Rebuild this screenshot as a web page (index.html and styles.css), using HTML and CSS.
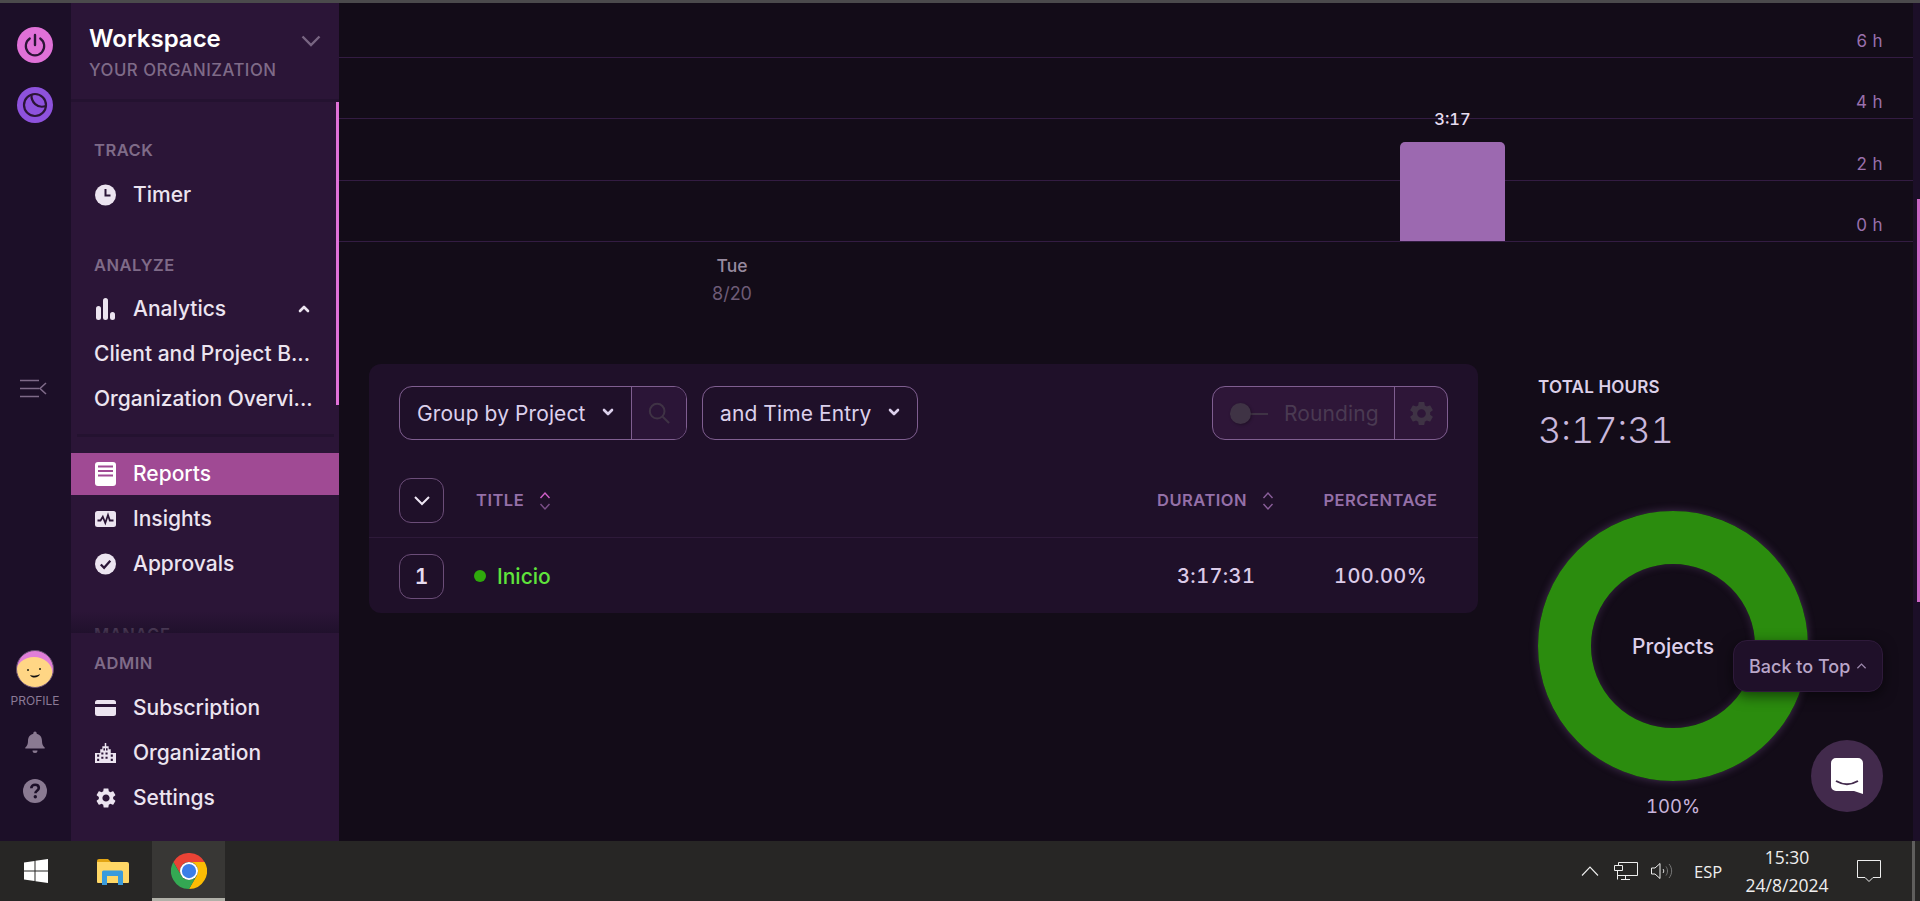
FILE: index.html
```html
<!DOCTYPE html>
<html lang="en">
<head>
<meta charset="utf-8">
<title>Reports</title>
<link rel="stylesheet" href="styles.css">
</head>
<body>
<svg class="defs" width="0" height="0">
  <symbol id="gear" viewBox="0 0 24 24"><path d="M19.14 12.94c.04-.3.06-.61.06-.94 0-.32-.02-.64-.07-.94l2.03-1.58c.18-.14.23-.41.12-.61l-1.92-3.32c-.12-.22-.37-.29-.59-.22l-2.39.96c-.5-.38-1.03-.7-1.62-.94l-.36-2.54c-.04-.24-.24-.41-.48-.41h-3.84c-.24 0-.43.17-.47.41l-.36 2.54c-.59.24-1.13.57-1.62.94l-2.39-.96c-.22-.08-.47 0-.59.22L2.74 8.87c-.12.21-.08.47.12.61l2.03 1.58c-.05.3-.09.63-.09.94s.02.64.07.94l-2.03 1.58c-.18.14-.23.41-.12.61l1.92 3.32c.12.22.37.29.59.22l2.39-.96c.5.38 1.03.7 1.62.94l.36 2.54c.05.24.24.41.48.41h3.84c.24 0 .44-.17.47-.41l.36-2.54c.59-.24 1.13-.56 1.62-.94l2.39.96c.22.08.47 0 .59-.22l1.92-3.32c.12-.22.07-.47-.12-.61l-2.01-1.58zM12 15.6c-1.98 0-3.6-1.62-3.6-3.6s1.62-3.6 3.6-3.6 3.6 1.62 3.6 3.6-1.62 3.6-3.6 3.6z"/></symbol>
  <symbol id="chev" viewBox="0 0 12 8"><path d="M2 2l4 4 4-4" fill="none" stroke="currentColor" stroke-width="2.600" stroke-linecap="round" stroke-linejoin="round"/></symbol>
  <symbol id="sort" viewBox="0 0 12 20"><path d="M1.500 7L6 2l4.500 5" fill="none" stroke="var(--sort-up)" stroke-width="1.400"/><path d="M1.500 13L6 18l4.500-5" fill="none" stroke="var(--sort-down)" stroke-width="1.400"/></symbol>
</svg>

<div class="topline"></div>
<div class="app">
  <nav class="rail">
    <div class="rail-top">
      <svg class="rail-btn" viewBox="0 0 36 36"><circle cx="18" cy="18" r="18" fill="#e071d8"/><path d="M12.800 11.500a9.200 9.200 0 1 0 10.400 0" fill="none" stroke="#2b1537" stroke-width="2.200" stroke-linecap="round"/><path d="M18 8v10" stroke="#2b1537" stroke-width="2.400" stroke-linecap="round"/></svg>
      <svg class="rail-btn" viewBox="0 0 36 36"><circle cx="18" cy="18" r="18" fill="#8e52dd"/><circle cx="18" cy="18" r="11" fill="none" stroke="#2b1537" stroke-width="2.200"/><path d="M14.500 7.500C14 15 20 22 29 19" fill="none" stroke="#2b1537" stroke-width="2.200"/></svg>
    </div>
    <svg class="collapse" viewBox="0 0 27 20"><path d="M0 1.500h19M0 9.500h19M0 17.500h19M26 4l-6 5.500 6 5.500" fill="none" stroke="#7e6a88" stroke-width="1.600"/></svg>
    <div class="rail-bottom">
      <svg class="avatar" viewBox="0 0 38 38"><defs><clipPath id="av"><circle cx="19" cy="19" r="18.500"/></clipPath></defs><g clip-path="url(#av)"><rect width="38" height="38" fill="#e07ed8"/><ellipse cx="18" cy="23" rx="18.500" ry="16" fill="#ffd685"/></g><circle cx="19" cy="19" r="18.500" fill="none" stroke="#64506f"/><circle cx="12" cy="20" r="1" fill="#221"/><circle cx="24" cy="19" r="1" fill="#221"/><path d="M14 25c3 1 7 1 10-1-1 4-8 5-10 1z" fill="#111"/></svg>
      <span class="profile">PROFILE</span>
      <svg class="bell" viewBox="0 0 24 24"><path fill="#8a7a92" d="M12 1.500a1.700 1.700 0 0 1 1.700 1.700v.6c3.500.8 5.300 3.700 5.300 7.200 0 3 .8 5 2.700 6.500v1H2.300v-1C4.200 16 5 14 5 11c0-3.500 1.800-6.400 5.300-7.200v-.6A1.700 1.700 0 0 1 12 1.500zM9.500 20.500h5a2.500 2.500 0 0 1-5 0z"/></svg>
      <svg class="help" viewBox="0 0 24 24"><circle cx="12" cy="12" r="12" fill="#8a7a92"/><path d="M8.300 9.300c0-2.200 1.700-3.500 3.800-3.500s3.700 1.200 3.700 3.100c0 2.900-3.400 2.700-3.400 5.300" fill="none" stroke="#1c0f28" stroke-width="2.600"/><circle cx="12.300" cy="17.800" r="1.700" fill="#1c0f28"/></svg>
    </div>
  </nav>

  <aside class="sidebar">
    <header class="org">
      <div class="org-text">
        <div class="org-name">Workspace</div>
        <div class="org-sub">YOUR ORGANIZATION</div>
      </div>
      <svg class="org-chev" viewBox="0 0 20 12"><path d="M1.500 1.500L10 10l8.500-8.500" fill="none" stroke="#786582" stroke-width="2.400"/></svg>
    </header>
    <div class="nav-scroll">
      <div class="nav-thumb"></div>
      <div class="nav-title first">TRACK</div>
      <a class="nav-row">
        <svg class="nav-icon" viewBox="0 0 21 21"><circle cx="10.500" cy="10.500" r="10.500" fill="#ece4f0"/><path d="M10.500 4.500v6.500h5" fill="none" stroke="#2b1537" stroke-width="2"/></svg>
        <span>Timer</span>
      </a>
      <div class="nav-title">ANALYZE</div>
      <a class="nav-row">
        <svg class="nav-icon" viewBox="0 0 21 22"><rect x="1" y="8" width="5" height="14" rx="2.500" fill="#ece4f0"/><rect x="8" y="0" width="5" height="22" rx="2.500" fill="#ece4f0"/><rect x="15" y="14" width="5" height="8" rx="2.500" fill="#ece4f0"/></svg>
        <span>Analytics</span>
        <svg class="nav-chev" viewBox="0 0 12 8"><use href="#chev" transform="rotate(180 6 4)"/></svg>
      </a>
      <a class="nav-row sub"><span>Client and Project B...</span></a>
      <a class="nav-row sub"><span>Organization Overvi...</span></a>
      <div class="nav-rule"></div>
      <a class="nav-row active">
        <svg class="nav-icon tall" viewBox="0 0 21 24"><rect width="21" height="24" rx="3" fill="#fff"/><path d="M3 4.500h15M3 9h15M3 13.500h15" stroke="#a04a94" stroke-width="2"/></svg>
        <span>Reports</span>
      </a>
      <a class="nav-row">
        <svg class="nav-icon" viewBox="0 0 21 16"><rect width="21" height="16" rx="2.500" fill="#ece4f0"/><path d="M2.500 9.500h3l2.300-3.800 2.500 6.300 2.700-8 1.800 5.500h3.700" fill="none" stroke="#2b1537" stroke-width="1.800"/></svg>
        <span>Insights</span>
      </a>
      <a class="nav-row">
        <svg class="nav-icon" viewBox="0 0 21 21"><circle cx="10.500" cy="10.500" r="10.500" fill="#ece4f0"/><path d="M5.800 11l3.300 3.300 6.200-7" fill="none" stroke="#2b1537" stroke-width="2.300"/></svg>
        <span>Approvals</span>
      </a>
      <div class="nav-title">MANAGE</div>
      <div class="nav-fade"></div>
    </div>
    <div class="admin">
      <div class="nav-title admin-title">ADMIN</div>
      <a class="nav-row">
        <svg class="nav-icon" viewBox="0 0 21 16"><rect width="21" height="16" rx="2.500" fill="#ece4f0"/><rect y="4" width="21" height="3" fill="#2b1537"/></svg>
        <span>Subscription</span>
      </a>
      <a class="nav-row">
        <svg class="nav-icon" viewBox="0 0 20 19"><path fill="#ece4f0" d="M5 6h2V3h2.300V0h1.400v3H13v3h2v3.500h5V19H0V9.500h5z"/><path fill="#2b1537" d="M8 5h1.500v2H8zM10.500 5H12v2h-1.500zM2 11h2v2H2zM2 15h2v2H2zM6 9h2v2H6zM6 13h2v2H6zM10 9h2v2h-2zM10 13h2v2h-2zM15 11h2v2h-2zM15 15h2v2h-2z"/></svg>
        <span>Organization</span>
      </a>
      <a class="nav-row">
        <svg class="nav-icon gear" viewBox="0 0 24 24"><use href="#gear"/></svg>
        <span>Settings</span>
      </a>
    </div>
  </aside>

  <main class="main">
    <section class="chart">
      <div class="grid-row r1"><span>6 h</span></div>
      <div class="grid-row r2"><span>4 h</span></div>
      <div class="grid-row r3"><span>2 h</span></div>
      <div class="grid-row r4"><span>0 h</span></div>
      <div class="bar"><span class="bar-label">3:17</span></div>
    </section>
    <div class="xaxis">
      <div class="xcol"><div class="x-day">Tue</div><div class="x-date">8/20</div></div>
    </div>
    <div class="content">
      <section class="card">
        <div class="controls">
          <div class="ctl ctl-group">
            <div class="ctl-select"><span>Group by Project</span><svg class="ctl-chev"><use href="#chev"/></svg></div>
            <div class="ctl-search">
              <svg viewBox="0 0 24 24"><circle cx="10" cy="10" r="8" fill="none" stroke="#3f3345" stroke-width="2.200"/><path d="M16 16l7 7" stroke="#3f3345" stroke-width="2.200"/></svg>
            </div>
          </div>
          <div class="ctl ctl-second">
            <div class="ctl-select"><span>and Time Entry</span><svg class="ctl-chev"><use href="#chev"/></svg></div>
          </div>
          <div class="ctl ctl-round">
            <div class="round-main">
              <span class="toggle"><i></i></span>
              <span>Rounding</span>
            </div>
            <div class="round-gear"><svg viewBox="0 0 24 24"><use href="#gear"/></svg></div>
          </div>
        </div>
        <div class="thead">
          <button class="sq"><svg viewBox="0 0 18 12"><path d="M2 2l7 7 7-7" fill="none" stroke="#eee6f4" stroke-width="2"/></svg></button>
          <div class="th th-title"><span>TITLE</span><svg class="sort active-sort"><use href="#sort"/></svg></div>
          <div class="th col-dur"><span>DURATION</span><svg class="sort"><use href="#sort"/></svg></div>
          <div class="th col-pct"><span>PERCENTAGE</span></div>
        </div>
        <div class="trow">
          <div class="sq">1</div>
          <div class="tname"><i class="dot"></i><span>Inicio</span></div>
          <div class="col-dur val">3:17:31</div>
          <div class="col-pct val">100.00%</div>
        </div>
      </section>
      <section class="totals">
        <div class="total-label">TOTAL HOURS</div>
        <div class="total-value">3:17:31</div>
        <div class="donut"><span>Projects</span></div>
        <div class="donut-pct">100%</div>
      </section>
    </div>
  </main>
  <div class="scroll"><div class="scroll-thumb"></div></div>
  <button class="backtop">Back to Top<svg viewBox="0 0 12 8"><path d="M1.500 6.500L6 2l4.500 4.500" fill="none" stroke="#9c88ac" stroke-width="1.400"/></svg></button>
  <button class="chat"><svg viewBox="0 0 32 36"><path fill="#fff" d="M5 0h22a5 5 0 0 1 5 5v31l-9-3H5a5 5 0 0 1-5-5V5a5 5 0 0 1 5-5z"/><path d="M5 23c7 4 15 4 22 0" fill="none" stroke="#422a4c" stroke-width="2"/></svg></button>
</div>

<footer class="taskbar">
  <svg class="win" viewBox="0 0 24 24"><path fill="#fff" d="M0 3.500l10.500-1.500v9.500H0zM11.500 1.800L24 0v11.500H11.500zM0 12.500h10.500V22L0 20.500zM11.500 12.500H24V24l-12.500-1.800z"/></svg>
  <svg class="explorer" viewBox="0 0 32 27"><path fill="#e2a514" d="M0 3a2 2 0 0 1 2-2h9l3 3h-14z"/><path fill="#ffd766" d="M0 4h30a2 2 0 0 1 2 2v18a1 1 0 0 1-1 1H1a1 1 0 0 1-1-1z"/><path fill="#3a9bdc" d="M5 27V14a1.500 1.500 0 0 1 1.500-1.500h18A1.500 1.500 0 0 1 26 14v13h-5v-9H10v9z"/></svg>
  <div class="chrome-tab">
    <svg class="chrome" viewBox="0 0 48 48"><path fill="#ea4335" d="M3.200 12A24 24 0 0 1 44.800 12H24A12 12 0 0 0 13.600 30Z"/><path fill="#fbbc04" d="M44.800 12A24 24 0 0 1 24 48L34.400 30A12 12 0 0 0 24 12Z"/><path fill="#34a853" d="M24 48A24 24 0 0 1 3.200 12L13.600 30A12 12 0 0 0 34.400 30Z"/><circle cx="24" cy="24" r="12" fill="#fff"/><circle cx="24" cy="24" r="9.500" fill="#3b7de8"/></svg>
  </div>
  <div class="tray">
    <svg class="t-up" viewBox="0 0 18 10"><path d="M1 9.500L9 1l8 8.500" fill="none" stroke="#eee" stroke-width="1.100"/></svg>
    <svg class="t-net" viewBox="0 0 24 18"><path d="M4.500 3.500V.5h19v13H3.500M3.500 8.500v9M7 17.500h9M11.500 13.500v4M.5 3.500h8V8.500h-8z" fill="none" stroke="#eee" stroke-width="1"/></svg>
    <svg class="t-vol" viewBox="0 0 23 18"><path d="M.5 6h3.500L9 1.500v15L4 12H.5z" fill="none" stroke="#eee" stroke-width="1"/><path d="M12 7c1 1.200 1 2.800 0 4" fill="none" stroke="#ddd" stroke-width="1"/><path d="M15 4.500c2 2.700 2 6.300 0 9M18 2c3.500 4 3.500 10 0 14" fill="none" stroke="#777" stroke-width="1"/></svg>
    <span class="t-lang">ESP</span>
    <div class="t-clock"><div>15:30</div><div>24/8/2024</div></div>
    <svg class="t-note" viewBox="0 0 24 24"><path d="M.5 1.500h23v17h-7.500l-4 4-4-4H.5z" fill="none" stroke="#eee" stroke-width="1"/></svg>
    <div class="t-desk"></div>
  </div>
</footer>
</body>
</html>
```
FILE: styles.css
```css
* { box-sizing: border-box; }
html, body { margin: 0; height: 100%; overflow: hidden; }
body {
  display: flex;
  flex-direction: column;
  width: 1920px;
  height: 901px;
  background: #130c18;
  color: #ece4f0;
  font-family: Inter, "Noto Sans", sans-serif;
}
.defs { position: absolute; }
.topline { height: 3px; flex: none; background: #4b4a4c; }
.app { position: relative; display: flex; height: 838px; flex: none; overflow: hidden; }

/* rail */
.rail {
  flex: none; width: 71px; background: #1c0f28; padding-right: 1px;
  display: flex; flex-direction: column; align-items: center;
}
.rail-top { display: flex; flex-direction: column; gap: 24px; padding-top: 24px; }
.rail-btn { display: block; width: 36px; height: 36px; }
.collapse { display: block; width: 27px; height: 20px; margin-top: 256px; margin-left: -4px; }
.rail-bottom { margin-top: auto; display: flex; flex-direction: column; align-items: center; padding-bottom: 38px; }
.avatar { display: block; width: 38px; height: 38px; }
.profile { font-size: 12px; line-height: 14px; margin-top: 6px; color: #8b7a96; }
.bell { width: 24px; height: 24px; margin-top: 22px; }
.help { width: 24px; height: 24px; margin-top: 25px; }

/* sidebar */
.sidebar { flex: none; width: 268px; background: #2b1537; display: flex; flex-direction: column; }
.org {
  flex: none; height: 99px; padding: 23px 18px 0; display: flex; justify-content: space-between;
  border-bottom: 3px solid #241230;
}
.org-name { font-size: 24px; line-height: 26px; font-weight: 600; color: #fff; }
.org-sub { font-size: 16.800px; line-height: 20px; margin-top: 7.500px; font-weight: 500; letter-spacing: .5px; color: #7f6b88; }
.org-chev { width: 20px; height: 12px; margin-top: 9px; }
.nav-scroll { position: relative; flex: 1; overflow: hidden; padding-top: 38px; }
.nav-thumb { position: absolute; right: 0; top: 0; width: 3px; height: 303px; background: #e071d8; }
.nav-title {
  padding-left: 23px; margin: 38px 0 11px; font-size: 16.500px; line-height: 20px; font-weight: 600;
  letter-spacing: .5px; color: #7f6b88;
}
.nav-title.first { margin-top: 0; margin-bottom: 12px; }
.nav-row {
  display: flex; align-items: center; height: 45px; padding-left: 24px;
  font-size: 21px; font-weight: 500; color: #ece4f0;
}
.nav-row.sub { padding-left: 23px; }
.nav-icon { flex: none; width: 21px; margin-right: 17px; height: 22px; fill: #ece4f0; }
.nav-icon.tall { height: 24px; }
.nav-icon.gear { height: 24px; width: 24px; margin: 0 15.500px 0 -1.500px; }
.nav-chev { width: 12px; height: 8px; margin-left: auto; margin-right: 29px; color: #ece4f0; }
.nav-rule { height: 3px; margin: 13px 5px 0 6px; background: #241230; }
.nav-row.active { height: 42px; margin: 15.500px 0 1.500px; background: #a04a94; color: #fff; }
.nav-fade {
  position: absolute; left: 0; right: 0; bottom: 0; height: 22px;
  background: linear-gradient(to bottom, rgba(28,15,40,0), rgba(28,15,40,.7));
}
.admin { flex: none; height: 208px; background: #2b1537; padding-top: 20px; }
.admin-title { margin-top: 0; margin-bottom: 12px; }

/* main */
.main { flex: 1; min-width: 0; }
.chart { position: relative; }
.grid-row {
  display: flex; justify-content: flex-end; align-items: flex-end;
  padding: 0 30px 6px 0; border-bottom: 1px solid #331c42;
  font-size: 17px; line-height: 20px; color: #9a70ac; letter-spacing: .4px;
}
.r1 { height: 55px; }
.r2 { height: 61px; }
.r3 { height: 62px; }
.r4 { height: 61px; }
.bar {
  position: absolute; left: 1061px; bottom: 1px; width: 105px; height: 99px;
  background: #9c69b0; border-radius: 5px 5px 0 0;
  display: flex; justify-content: center;
}
.bar-label { position: absolute; top: -33px; font-size: 16.500px; line-height: 20px; font-weight: 500; color: #e6dcef; font-variant-numeric: tabular-nums; }
.xaxis { height: 122px; padding-left: 273px; padding-top: 14px; }
.xcol { width: 240px; text-align: center; font-size: 17.500px; line-height: 20px; }
.x-day { color: #978a9f; font-weight: 500; }
.x-date { color: #6d5b76; margin-top: 8px; font-size: 18px; }
.content { display: flex; padding-left: 30px; }

/* card */
.card { flex: none; width: 1109px; height: 249px; background: #1f1029; border-radius: 12px; padding-top: 22px; }
.controls { display: flex; gap: 15px; padding: 0 30px; height: 54px; }
.ctl {
  display: flex; height: 54px; border: 1.500px solid #7f5e90; border-radius: 13px; overflow: hidden;
  font-size: 21px; font-weight: 400; letter-spacing: .1px; color: #dcd0ec;
}
.ctl-group { width: 288px; }
.ctl-second { width: 216px; }
.ctl-select { display: flex; align-items: center; padding: 1.500px 0 0 17px; flex: 1; position: relative; }
.ctl-chev { position: absolute; width: 12px; height: 8px; right: 17px; top: 21px; color: #dcd0ec; }
.ctl-group .ctl-select { border-right: 1px solid #7f5e90; }
.ctl-search { flex: none; width: 54px; background: #2b1537; display: flex; align-items: center; justify-content: center; }
.ctl-search svg { width: 22px; height: 22px; }
.ctl-round { margin-left: auto; width: 236px; background: #2e1638; color: #4a3a52; }
.round-main { flex: 1; display: flex; align-items: center; padding: 1.500px 0 0 17px; border-right: 1.500px solid #7f5e90; }
.toggle { position: relative; width: 38px; height: 2px; background: #3f3345; margin-right: 16px; }
.toggle i { position: absolute; left: 0; top: -10px; width: 21px; height: 21px; border-radius: 50%; background: #3f3345; box-shadow: 1px 1px 3px rgba(0,0,0,.3); }
.round-gear { flex: none; width: 52px; display: flex; align-items: center; justify-content: center; }
.round-gear svg { width: 29px; height: 29px; fill: #3f3345; }

.thead { display: flex; align-items: center; margin-top: 38px; padding: 0 0 14px 30px; border-bottom: 1px solid #2e1a3a; }
.trow { display: flex; align-items: center; padding: 15.500px 0 0 30px; }
.sq {
  flex: none; width: 45px; height: 45px; padding: 0; display: flex; align-items: center; justify-content: center;
  background: none; border: 1px solid #6b4d78; border-radius: 12px;
  font: 600 21px Inter, sans-serif; color: #e6dcef; font-variant-numeric: tabular-nums;
}
.sq svg { width: 18px; height: 12px; }
.th { display: flex; align-items: center; font-size: 16.500px; font-weight: 600; letter-spacing: .5px; color: #9570a8; }
.th span { padding-bottom: 2px; }
.th-title { margin-left: 32px; flex: 1; }
.sort { width: 12px; height: 20px; margin-left: 15px; --sort-up: #8a5e9a; --sort-down: #8a5e9a; }
.active-sort { --sort-up: #d05fc8; --sort-down: #7b4f88; }
.col-dur { flex: none; width: 166px; }
.col-pct { flex: none; width: 155px; padding-right: 40px; justify-content: center; text-align: center; }
.tname { margin-left: 30px; flex: 1; display: flex; align-items: center; font-size: 21px; font-weight: 500; color: #5fe43c; }
.dot { width: 12px; height: 12px; border-radius: 50%; background: #2fa80c; margin-right: 11px; }
.val { font-size: 20px; font-weight: 500; color: #dccbe8; font-variant-numeric: tabular-nums; letter-spacing: .4px; }
.trow .col-dur { padding-left: 20px; }

/* totals */
.totals { margin-left: 60px; width: 270px; }
.total-label { margin-top: 13px; font-size: 17px; line-height: 20px; font-weight: 600; letter-spacing: .2px; color: #dcd0e8; }
.total-value { margin-top: 10px; font-size: 36px; line-height: 46px; font-weight: 300; font-variant-numeric: tabular-nums; color: #c9b8dc; }
.donut {
  margin-top: 58px; width: 270px; height: 270px; border-radius: 50%; border: 53px solid #2b8c0e;
  box-shadow: 0 0 8px rgba(170,120,200,.35), inset 0 0 8px rgba(170,120,200,.25);
  display: flex; align-items: center; justify-content: center;
  font-size: 21px; font-weight: 500; color: #ddd0ea;
}
.donut-pct { margin-top: 14px; text-align: center; font-size: 18.500px; line-height: 22px; color: #c9b4dc; font-variant-numeric: tabular-nums; }

/* overlays */
.scroll { position: relative; flex: none; width: 7px; background: #1c0f28; }
.scroll-thumb { position: absolute; right: 0; top: 196px; width: 3px; height: 403px; background: #cc66c4; }
.backtop {
  position: absolute; left: 1733px; top: 637px; width: 150px; height: 52px; padding: 0 0 0 15px;
  display: flex; align-items: center;
  background: #1f1029; border: 1px solid #2e1a3a; border-radius: 14px;
  box-shadow: 0 4px 14px rgba(0,0,0,.55);
  font: 500 18px Inter, sans-serif; color: #b9a6c8;
}
.backtop svg { width: 11px; height: 8px; margin-left: 6px; flex: none; }
.chat {
  position: absolute; left: 1811px; top: 737px; width: 72px; height: 72px; padding: 0; border: 0; border-radius: 50%;
  background: #422a4c; display: flex; align-items: center; justify-content: center;
}
.chat svg { width: 32px; height: 36px; }

/* taskbar */
.taskbar { flex: none; height: 60px; background: #272625; display: flex; align-items: center; position: relative; font-family: "Open Sans", "Noto Sans", sans-serif; color: #eee; }
.win { width: 24px; height: 24px; margin-left: 24px; }
.explorer { width: 32px; height: 27px; margin-left: 49px; }
.chrome-tab { width: 73px; height: 60px; margin-left: 23px; background: #383735; border-bottom: 3px solid #b0b0a8; display: flex; align-items: center; justify-content: center; }
.chrome { width: 36px; height: 36px; margin-top: 3px; }
.tray { margin-left: auto; display: flex; align-items: center; height: 60px; }
.t-up { width: 18px; height: 10px; }
.t-net { width: 24px; height: 18px; margin-left: 15px; }
.t-vol { width: 23px; height: 18px; margin-left: 13px; }
.t-lang { font-size: 16.500px; margin-left: 20px; width: 30px; }
.t-clock { width: 100px; margin-left: 13px; text-align: center; font-size: 17.500px; line-height: 28px; }
.t-note { width: 24px; height: 24px; margin-left: 20px; }
.t-desk { width: 3px; height: 60px; margin-left: 31px; margin-right: 5px; background: #5f5e5d; }
```
